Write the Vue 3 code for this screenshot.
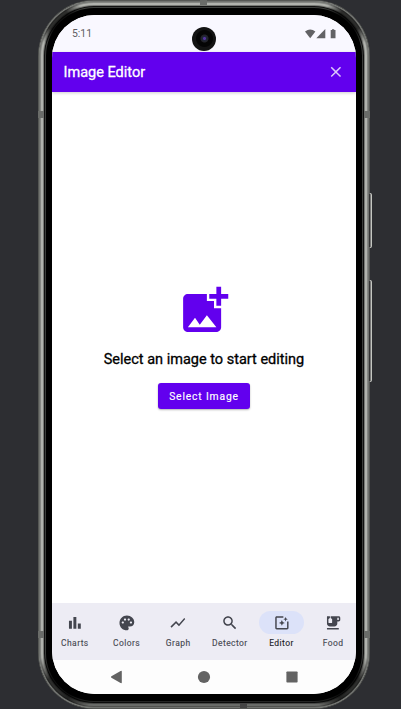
<script setup>
const tabs = [
  { label: 'Charts', path: 'M4 9h4v11H4zM16 13h4v7h-4zM10 4h4v16h-4z' },
  { label: 'Colors', path: 'M12 2C6.49 2 2 6.49 2 12s4.49 10 10 10c1.38 0 2.5-1.12 2.5-2.5 0-.61-.23-1.2-.64-1.67-.08-.1-.13-.21-.13-.33 0-.28.22-.5.5-.5H16c3.31 0 6-2.69 6-6 0-4.96-4.49-9-10-9zm5.5 11c-.83 0-1.5-.67-1.5-1.5s.67-1.5 1.5-1.5 1.5.67 1.5 1.5-.67 1.5-1.5 1.5zm-3-4c-.83 0-1.5-.67-1.5-1.5S13.67 6 14.5 6s1.5.67 1.5 1.5S15.33 9 14.5 9zM5 11.5c0-.83.67-1.5 1.5-1.5s1.5.67 1.5 1.5S7.33 13 6.5 13 5 12.33 5 11.5zm6-4c0 .83-.67 1.5-1.5 1.5S8 8.33 8 7.5 8.67 6 9.5 6s1.5.67 1.5 1.5z' },
  { label: 'Graph', path: 'M3.5 18.49l6-6.01 4 4L22 6.92l-1.41-1.41-7.09 7.97-4-4L2 16.99z' },
  { label: 'Detector', path: 'M15.5 14h-.79l-.28-.27C15.41 12.59 16 11.11 16 9.5 16 5.91 13.09 3 9.5 3S3 5.91 3 9.5 5.91 16 9.5 16c1.61 0 3.09-.59 4.23-1.57l.27.28v.79l5 4.99L20.49 19l-4.99-5zm-6 0C7.01 14 5 11.99 5 9.5S7.01 5 9.5 5 14 7.01 14 9.5 11.99 14 9.5 14z' },
  { label: 'Editor', active: true, path: 'M19.02 10v9H5V5h9V3H5.02c-1.1 0-2 .9-2 2v14c0 1.1.9 2 2 2H19c1.1 0 2-.9 2-2v-9h-1.98zM17 10l.94-2.06L20 7l-2.06-.94L17 4l-.94 2.06L14 7l2.06.94zM13.25 10.75L12 8l-1.25 2.75L8 12l2.75 1.25L12 16l1.25-2.75L16 12z' },
  { label: 'Food', path: 'M20 3H9v2.4l1.81 1.45c.12.09.19.24.19.39v4.26c0 .28-.22.5-.5.5h-4c-.28 0-.5-.22-.5-.5V7.24c0-.15.07-.3.19-.39L8 5.4V3H4v10c0 2.21 1.79 4 4 4h6c2.21 0 4-1.79 4-4v-3h2c1.11 0 2-.9 2-2V5c0-1.11-.89-2-2-2zm0 5h-2V5h2v3zM4 19h16v2H4z' }
]
</script>

<template>
  <div class="stage">
    <div class="phone">
      <span class="key power"></span>
      <span class="key volume"></span>
      <div class="bezel">
        <div class="screen">
          <div class="status">
            <span class="clock">5:11</span>
            <svg class="signals" viewBox="0 0 32 10">
              <path d="M0 2.6Q5.2-1.6 10.4 2.6L5.2 9.2z" />
              <path d="M20.3 0v9.2h-9z" />
              <path d="M27 .2h2.2v.9h1.3v8.1h-4.8V1.1H27z" />
            </svg>
          </div>
          <header class="bar">
            <h1>Image Editor</h1>
            <svg class="close" viewBox="0 0 24 24"><path d="M19 6.41L17.59 5 12 10.59 6.41 5 5 6.41 10.59 12 5 17.59 6.41 19 12 13.41 17.59 19 19 17.59 13.41 12z" /></svg>
          </header>
          <main class="content">
            <svg class="add" viewBox="0 0 24 24"><path d="M17 2h2v3h3v2h-3v3h-2V7h-3V5h3zM16 11V8h-3V5H5c-1.1 0-2 .9-2 2v12c0 1.1.9 2 2 2h12c1.1 0 2-.9 2-2v-8zM5 19l3-4 2 3 3-4 4 5z" /></svg>
            <p class="prompt">Select an image to start editing</p>
            <button class="select">Select Image</button>
          </main>
          <nav class="tabs">
            <div v-for="tab in tabs" :key="tab.label" class="tab" :class="{ active: tab.active }">
              <span class="pill"><svg viewBox="0 0 24 24"><path :d="tab.path" /></svg></span>
              <span class="label">{{ tab.label }}</span>
            </div>
          </nav>
          <div class="system">
            <svg viewBox="0 0 14 14"><path d="M1.4 6.2L10.6 1q1.2-.5 1.2.6v10.8q0 1.1-1.2.6L1.4 7.8q-1.1-.8 0-1.6z" /></svg>
            <svg viewBox="0 0 14 14"><circle cx="7" cy="7" r="6.1" /></svg>
            <svg viewBox="0 0 14 14"><rect x="1.4" y="1.4" width="11.2" height="11.2" rx=".8" /></svg>
          </div>
        </div>
      </div>
      <span class="antenna lt"></span>
      <span class="antenna lb"></span>
      <span class="antenna rt"></span>
      <span class="antenna rb"></span>
      <span class="antenna top"></span>
      <span class="antenna bottom"></span>
      <span class="camera"></span>
    </div>
  </div>
</template>

<style>
body { background: #2d2e32; overflow: hidden; }
</style>

<style scoped>
.stage {
  width: 401px;
  height: 709px;
  overflow: hidden;
  display: flex;
  justify-content: center;
  box-sizing: border-box;
  padding-left: 7px;
  background: #2d2e32;
  font-family: Roboto, sans-serif;
}
.phone {
  position: relative;
  box-sizing: border-box;
  flex: none;
  width: 332px;
  height: 709px;
  padding: 1px;
  border-radius: 56px;
  background: #343536;
  box-shadow: inset 0 0 0 1px #555754;
}
.bezel {
  position: relative;
  box-sizing: border-box;
  height: 707px;
  padding: 14px 13px;
  border-radius: 55px;
  background: #000;
  box-shadow: inset 0 0 0 1px #70726f, inset 0 0 0 2px #858783, inset 0 0 0 4px #b0b2ad, inset 0 0 0 5px #777975, inset 0 0 0 6px #111, inset 0 0 0 7px #3b3d3b;
}
.bezel::before {
  content: "";
  position: absolute;
  inset: 1px;
  border-radius: 54px;
  background:
    radial-gradient(circle at 16px 16px, rgba(0, 0, 0, .75) 12px, transparent 28px),
    radial-gradient(circle at calc(100% - 16px) 16px, rgba(0, 0, 0, .75) 12px, transparent 28px),
    radial-gradient(circle at 16px calc(100% - 16px), rgba(0, 0, 0, .75) 14px, transparent 36px),
    radial-gradient(circle at calc(100% - 16px) calc(100% - 16px), rgba(0, 0, 0, .75) 14px, transparent 36px),
    linear-gradient(transparent 690px, rgba(0, 0, 0, .4) 699px);
}
.screen {
  position: relative;
  display: flex;
  flex-direction: column;
  width: 304px;
  height: 679px;
  border-radius: 43px;
  overflow: hidden;
  background: #fff;
}
.status {
  flex: none;
  height: 37px;
  box-sizing: border-box;
  display: flex;
  align-items: center;
  justify-content: space-between;
  padding: 0 19px 0 20px;
  background: #f9f8ff;
  color: #5f5f63;
}
.clock { font-size: 10.4px; line-height: 12px; }
.signals { width: 32px; height: 10px; fill: #626265; }
.bar {
  position: relative;
  flex: none;
  height: 40px;
  box-sizing: border-box;
  display: flex;
  align-items: center;
  justify-content: space-between;
  padding: 0 11px 0 11.5px;
  background: #6200ee;
  box-shadow: 0 1px 3px rgba(0, 0, 0, .2);
}
h1 {
  margin: 0;
  padding-top: 1px;
  font-size: 14.5px;
  line-height: 20px;
  font-weight: 400;
  color: #fff;
  -webkit-text-stroke: .3px #fff;
}
.close { width: 17.76px; height: 17.76px; fill: #dcc7fb; }
.content {
  flex: 1;
  display: flex;
  flex-direction: column;
  align-items: center;
  padding-top: 190px;
}
.add { flex: none; width: 57px; height: 57px; fill: #6200ee; }
.prompt {
  margin: 11px 0 13px;
  font-size: 14.5px;
  line-height: 20px;
  font-weight: 400;
  color: #000;
  -webkit-text-stroke: .3px #000;
  white-space: nowrap;
}
.select {
  width: 92px;
  height: 26px;
  padding: 1px 0 0;
  border: 0;
  border-radius: 3px;
  background: #6200ee;
  color: #fff;
  font: 400 10.3px/25px Roboto, sans-serif;
  letter-spacing: .85px;
  -webkit-text-stroke: .15px #fff;
  white-space: nowrap;
  box-shadow: 0 1px 2px rgba(0, 0, 0, .3);
}
.tabs {
  flex: none;
  height: 57px;
  box-sizing: border-box;
  display: grid;
  grid-template-columns: repeat(6, 1fr);
  column-gap: 5.9px;
  padding-top: 8px;
  background: #edecf4;
  color: #44464f;
}
.tab { display: flex; flex-direction: column; align-items: center; gap: 4px; }
.pill {
  display: flex;
  align-items: center;
  justify-content: center;
  width: 45px;
  height: 23px;
  border-radius: 12px;
}
.pill svg { width: 17.76px; height: 17.76px; fill: #44464f; }
.active .pill { background: #dce2f9; }
.label {
  font-size: 8.5px;
  line-height: 11px;
  font-weight: 400;
  letter-spacing: .42px;
  -webkit-text-stroke: .1px currentColor;
  white-space: nowrap;
}
.active .label { color: #1b1b1f; }
.system {
  flex: none;
  height: 34px;
  display: flex;
  justify-content: center;
  align-items: center;
  gap: 73.5px;
  background: #fdfdfd;
}
.system svg { width: 14px; height: 14px; fill: #636363; }
.camera {
  position: absolute;
  left: 154px;
  top: 27px;
  width: 24px;
  height: 24px;
  border-radius: 50%;
  background: radial-gradient(circle at 12.5px 11.5px, #5535a0 0 1px, #20263b 2px, #242329 3.5px, #050505 4.5px 8px, #131313 9px);
}
.key {
  position: absolute;
  left: 331px;
  width: 3px;
  box-sizing: border-box;
  border: 1px solid #c4c6c1;
  border-left-color: #333;
  border-radius: 0 2px 2px 0;
  background: #777;
}
.power { top: 193px; height: 55px; }
.volume { top: 280px; height: 102px; }
.antenna { position: absolute; background: #6a6c69; }
.lt, .lb { left: 0; width: 6px; height: 7px; }
.rt, .rb { right: 0; width: 6px; height: 7px; }
.lt, .rt { top: 111px; }
.lb, .rb { top: 631px; }
.top { left: 162px; top: 0; width: 7px; height: 5px; }
.bottom { left: 202px; bottom: 1px; width: 7px; height: 5px; background: #444; }
</style>
